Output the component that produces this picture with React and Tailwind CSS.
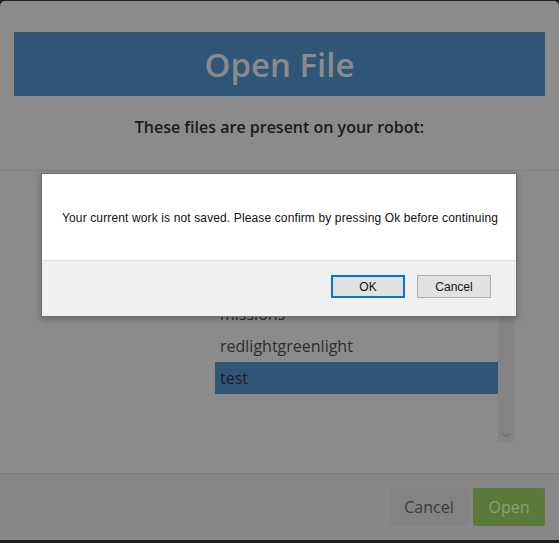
import React from "react";

const files = ["blink", "dance", "linefollower", "missions", "redlightgreenlight", "test"];

export default function App() {
  return (
    <div className="relative h-[543px] w-[559px] overflow-hidden bg-[#1c1e20] pt-px font-['Open_Sans',sans-serif]">
      <div className="flex h-[539px] flex-col rounded-[5px] bg-[#8b8b8b]">
        {/* header */}
        <div className="h-[170px] border-b border-[#828282] px-[14px] pt-[31px]">
          <div className="flex h-[64px] items-center justify-center bg-[#2f5677]">
            <h1 className="text-[33px] font-semibold leading-none text-[#8b8b8b]">Open File</h1>
          </div>
          <p className="mt-[20px] text-center text-[16px] font-semibold leading-[22px] text-[#1a1a1a]">
            These files are present on your robot:
          </p>
        </div>

        {/* file list */}
        <div className="flex-1 pt-[31px]">
          <div className="ml-[215px] flex h-[240px] w-[300px]">
            <ul className="w-[283px] overflow-hidden">
              {files.map((f) => (
                <li
                  key={f}
                  className={
                    f === "test"
                      ? "h-[32px] bg-[#2f5677] pl-[5px] text-[16px] leading-[32px] text-[#1e1e1e]"
                      : "h-[32px] pl-[5px] text-[16px] leading-[32px] text-[#2b2b2b]"
                  }
                >
                  {f}
                </li>
              ))}
            </ul>
            <div className="flex w-[16px] flex-col justify-end bg-[#848484] pb-[4px]">
              <svg viewBox="0 0 8 5" className="mx-auto h-[5px] w-[8px]">
                <path d="M0.5 0.5 L4 4 L7.5 0.5" fill="none" stroke="#6f6f6f" strokeWidth="1.2" />
              </svg>
            </div>
          </div>
        </div>

        {/* footer */}
        <div className="flex h-[67px] justify-end gap-[4px] border-t border-[#7e7e7e] bg-[#878787] pr-[14px] pt-[14px]">
          <button className="h-[38px] w-[80px] rounded-[2px] bg-[#838383] text-[16px] text-[#3a3a3a]">Cancel</button>
          <button className="h-[38px] w-[72px] rounded-[2px] bg-[#5a7a3a] text-[16px] text-[#8ea273]">Open</button>
        </div>
      </div>

      {/* confirm dialog */}
      <div className="absolute left-[41px] top-[173px] flex h-[144px] w-[476px] flex-col border border-[#6e6e6e] bg-white font-['Liberation_Sans',Arial,sans-serif] shadow-[0_2px_6px_rgba(0,0,0,0.25)]">
        <div className="flex h-[86px] items-center pl-[20px] pt-[2px] text-[12px] tracking-[0.13px] text-[#111]">
          Your current work is not saved. Please confirm by pressing Ok before continuing
        </div>
        <div className="flex flex-1 justify-end gap-[12px] border-t border-[#dfdfdf] bg-[#f0f0f0] pr-[25px] pt-[14px]">
          <button className="h-[23px] w-[74px] border-2 border-[#0078d7] bg-[#e1e1e1] text-[12px] text-[#111]">OK</button>
          <button className="h-[23px] w-[74px] border border-[#adadad] bg-[#e1e1e1] text-[12px] text-[#111]">Cancel</button>
        </div>
      </div>
    </div>
  );
}
